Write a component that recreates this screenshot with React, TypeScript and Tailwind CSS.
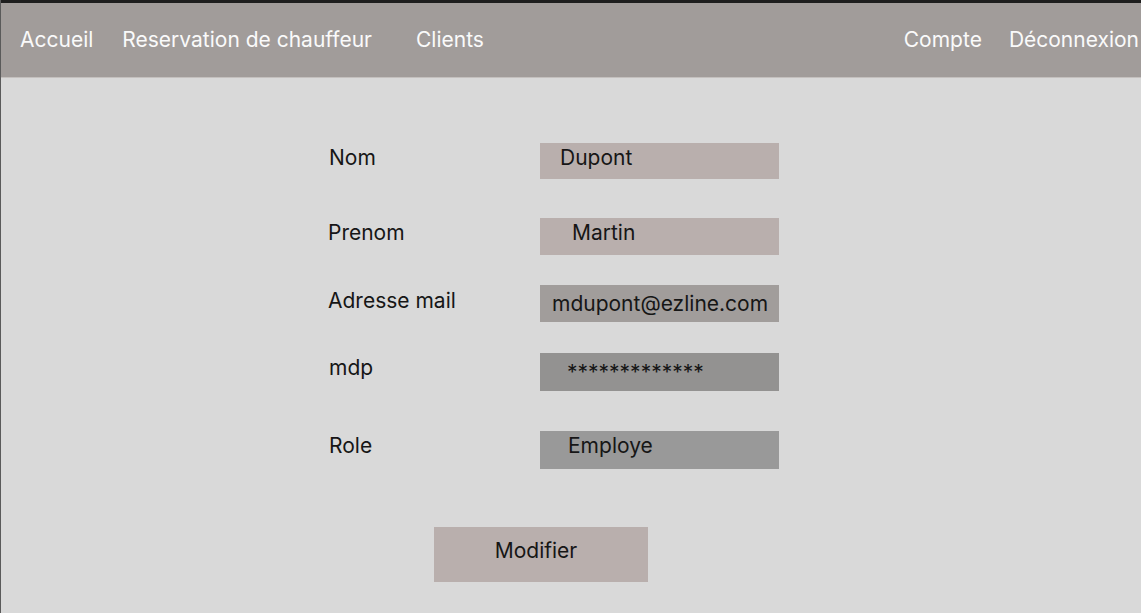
const fields = [
  { label: "Nom", value: "Dupont", box: "h-[36px] bg-[#b9afad]", labelPad: "pt-[3px] pl-[1px]", valuePad: "pt-[3px] pl-[20px]", gap: "mt-0" },
  { label: "Prenom", value: "Martin", box: "h-[37px] bg-[#b9afad]", labelPad: "pt-[3px]", valuePad: "pt-[3px] pl-[32px]", gap: "mt-[39px]" },
  { label: "Adresse mail", value: "mdupont@ezline.com", box: "h-[37px] bg-[#a19d9b]", labelPad: "pt-[4px]", valuePad: "pt-[7px] pl-[12px]", gap: "mt-[30px]" },
  { label: "mdp", value: "*************", box: "h-[38px] bg-[#939291]", labelPad: "pt-[3px] pl-[1px]", valuePad: "pt-[8px] pl-[27px]", gap: "mt-[31px]" },
  { label: "Role", value: "Employe", box: "h-[38px] bg-[#999999]", labelPad: "pt-[3px] pl-[1px]", valuePad: "pt-[3px] pl-[28px]", gap: "mt-[40px]" },
];

export default function App() {
  return (
    <div className="flex h-[613px] flex-col overflow-hidden border-l border-[#5a5a5a] bg-[#1e1e1e] pt-[3px] font-['Inter','Noto_Sans',sans-serif]">
      <header className="flex h-[75px] shrink-0 items-center border-b border-[#c4c0be] bg-[#a19c9a] text-[21px] text-[#fafafa]">
        <nav className="flex items-center">
          <a className="ml-[19px]">Accueil</a>
          <a className="ml-[29px]">Reservation de chauffeur</a>
          <a className="ml-[44px]">Clients</a>
        </nav>
        <nav className="ml-auto flex items-center">
          <a>Compte</a>
          <a className="ml-[27px] mr-[2px]">Déconnexion</a>
        </nav>
      </header>
      <main className="flex-1 bg-[#d9d9d9] pt-[65px] text-[21px] text-[#161616]">
        <div className="ml-[327px] w-[451px]">
          {fields.map((f) => (
            <div key={f.label} className={`flex items-start ${f.gap}`}>
              <span className={`w-[212px] leading-6 ${f.labelPad}`}>{f.label}</span>
              <div className={`w-[239px] leading-6 ${f.box} ${f.valuePad}`}>{f.value}</div>
            </div>
          ))}
          <button
            type="button"
            className="ml-[106px] mt-[58px] flex h-[55px] w-[214px] items-start justify-center bg-[#b9afad] pt-[12px] pr-[10px] leading-6"
          >
            Modifier
          </button>
        </div>
      </main>
    </div>
  );
}
